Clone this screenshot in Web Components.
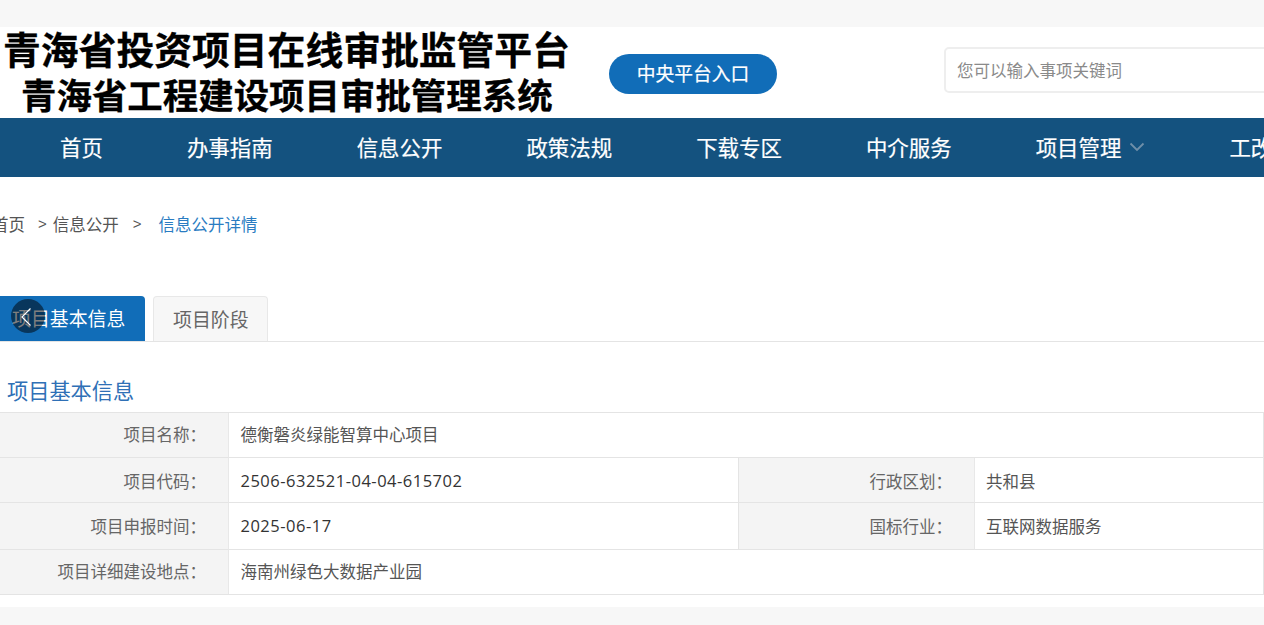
<!DOCTYPE html>
<html lang="zh-CN">
<head>
<meta charset="UTF-8">
<title>项目基本信息</title>
<style>
    html, body { margin: 0; height: 625px; overflow: hidden; background: #f7f7f7; }
    body { font-family: "Noto Sans CJK SC", "Liberation Sans", sans-serif; }
</style>
</head>
<body>
<site-header></site-header>
<site-nav>
    <nav-item>首页</nav-item>
    <nav-item>办事指南</nav-item>
    <nav-item>信息公开</nav-item>
    <nav-item>政策法规</nav-item>
    <nav-item>下载专区</nav-item>
    <nav-item>中介服务</nav-item>
    <nav-item more>项目管理</nav-item>
    <nav-item>工改</nav-item>
</site-nav>
<main-panel>
    <bread-crumb></bread-crumb>
    <tab-bar></tab-bar>
    <info-table></info-table>
</main-panel>

<script>
class SiteHeader extends HTMLElement {
    constructor() {
        super();
        this.attachShadow({ mode: 'open' });
    }
    connectedCallback() {
        this.shadowRoot.innerHTML = `
            <style>
                :host { display: flex; margin-top: 27px; height: 91px; background: #fff; font-family: "Noto Sans CJK SC", sans-serif; }
                .logo { flex: 0 0 606px; margin: -2px 0 0 3px; color: #000; font-weight: 700; white-space: nowrap; -webkit-text-stroke: .3px #000; }
                .logo div:first-child { font-size: 37.8px; line-height: 46px; }
                .logo div:last-child { font-size: 35.45px; line-height: 46px; margin-left: 18px; }
                .btn { flex: 0 0 168px; height: 40px; margin: 27px 167px 0 0; border-radius: 20px; background: #116db8; color: #fff; font-size: 18.8px; line-height: 38px; text-align: center; -webkit-text-stroke: .2px #fff; }
                .search { flex: 0 0 400px; box-sizing: border-box; height: 46px; margin-top: 20px; padding-left: 11px; border: 2px solid #eee; border-radius: 5px; color: #8a8a8a; font-size: 16.5px; line-height: 42px; overflow: hidden; }
            </style>
            <div class="logo"><div>青海省投资项目在线审批监管平台</div><div>青海省工程建设项目审批管理系统</div></div>
            <div class="btn">中央平台入口</div>
            <div class="search">您可以输入事项关键词</div>
        `;
    }
}

class SiteNav extends HTMLElement {
    constructor() {
        super();
        this.attachShadow({ mode: 'open' });
    }
    connectedCallback() {
        this.shadowRoot.innerHTML = `
            <style>
                :host { display: flex; height: 59px; padding-left: 18px; background: #14527f; overflow: hidden; }
            </style>
            <slot></slot>
        `;
    }
}

class NavItem extends HTMLElement {
    constructor() {
        super();
        this.attachShadow({ mode: 'open' });
    }
    connectedCallback() {
        const more = this.hasAttribute('more');
        this.shadowRoot.innerHTML = `
            <style>
                :host { display: flex; flex: none; align-items: center; box-sizing: border-box; height: 57px; padding: 0 42px; color: #fff; font-size: 21.45px; white-space: nowrap; -webkit-text-stroke: .2px #fff; }
                svg { margin-left: 8px; }
            </style>
            <slot></slot>
            ${more ? '<svg width="16" height="10" viewBox="0 0 16 10" fill="none" stroke="#6f8fa9" stroke-width="1.8"><path d="M1.500 1.500 8 8l6.500-6.500"/></svg>' : ''}
        `;
    }
}

class MainPanel extends HTMLElement {
    constructor() {
        super();
        this.attachShadow({ mode: 'open' });
    }
    connectedCallback() {
        this.shadowRoot.innerHTML = `
            <style>
                :host { display: block; height: 430px; background: #fff; overflow: hidden; }
            </style>
            <slot></slot>
        `;
    }
}

class BreadCrumb extends HTMLElement {
    constructor() {
        super();
        this.attachShadow({ mode: 'open' });
    }
    connectedCallback() {
        this.shadowRoot.innerHTML = `
            <style>
                :host { display: flex; height: 24px; margin: 35px 0 0 -8px; color: #555; font-size: 16.5px; line-height: 24px; white-space: nowrap; }
                .sep { font-family: "Liberation Sans", sans-serif; font-size: 15px; }
                .cur { color: #2a7cc2; }
            </style>
            <span>首页</span>
            <span class="sep" style="margin-left:13px">&gt;</span>
            <span style="margin-left:6px">信息公开</span>
            <span class="sep" style="margin-left:14px">&gt;</span>
            <span class="cur" style="margin-left:17px">信息公开详情</span>
        `;
    }
}

class TabBar extends HTMLElement {
    constructor() {
        super();
        this.attachShadow({ mode: 'open' });
    }
    connectedCallback() {
        this.shadowRoot.innerHTML = `
            <style>
                :host { display: flex; position: relative; gap: 8px; height: 45px; margin: 60px 0 0 -8px; padding-right: 8px; border-bottom: 1px solid #e4e4e4; font-size: 18.9px; white-space: nowrap; }
                .tab { box-sizing: border-box; height: 45px; padding: 0 18px 0 19px; border: 1px solid #e8e8e8; border-bottom: 0; border-radius: 4px 4px 0 0; background: #f7f7f7; color: #666; line-height: 44px; }
                .tab.on { width: 153px; padding: 0 0 0 20px; border: 0; background: #116db8; color: #fff; }
                .prev { position: absolute; left: 19px; top: 3px; width: 34px; height: 34px; border-radius: 50%; background: rgba(0, 0, 0, .5); }
                .prev svg { display: block; }
            </style>
            <div class="tab on">项目基本信息</div>
            <div class="tab">项目阶段</div>
            <div class="prev"><svg width="34" height="34" viewBox="0 0 34 34" fill="none" stroke="#fff" stroke-width="1.2"><path d="M19.500 9.500 11 18l8.500 8.500"/></svg></div>
        `;
    }
}

class InfoTable extends HTMLElement {
    constructor() {
        super();
        this.attachShadow({ mode: 'open' });
    }
    connectedCallback() {
        this.shadowRoot.innerHTML = `
            <style>
                :host { display: block; margin-left: -12px; font-size: 16.5px; }
                h3 { margin: 33px 0 7px 19px; color: #2f70b6; font-size: 21.2px; font-weight: 400; line-height: 30px; }
                .grid { display: grid; grid-template-columns: 241px 510px 236px 289px; grid-template-rows: 45px 45px 47px 44px; width: 1276px; box-sizing: border-box; border: solid #e4e4e4; border-width: 1px 1px 1px 0; }
                .grid > div { box-sizing: border-box; padding: 0 11.5px; border-bottom: 1px solid #e4e4e4; white-space: nowrap; }
                .grid > div:nth-last-child(-n+2) { border-bottom: 0; }
                .r1 { line-height: 42px; }
                .r2 { line-height: 46px; }
                .r3 { line-height: 46px; }
                .r4 { line-height: 42px; }
                .k { padding-right: 22px !important; border-right: 1px solid #e8e8e8; background: #f4f4f4; color: #666; text-align: right; }
                .v { color: #555; }
                .v.num { color: #333; font-family: "Open Sans", sans-serif; font-size: 16.5px; letter-spacing: .5px; }
                .v.bar { border-right: 1px solid #e4e4e4; }
                .v.end { padding-left: 11px; }
                .wide { grid-column: span 3; }
            </style>
            <h3>项目基本信息</h3>
            <div class="grid">
                <div class="k r1">项目名称：</div><div class="v r1 wide">德衡磐炎绿能智算中心项目</div>
                <div class="k r2">项目代码：</div><div class="v r2 num bar">2506-632521-04-04-615702</div>
                <div class="k r2">行政区划：</div><div class="v r2 end">共和县</div>
                <div class="k r3">项目申报时间：</div><div class="v r3 num bar">2025-06-17</div>
                <div class="k r3">国标行业：</div><div class="v r3 end">互联网数据服务</div>
                <div class="k r4">项目详细建设地点：</div><div class="v r4 wide">海南州绿色大数据产业园</div>
            </div>
        `;
    }
}

customElements.define('site-header', SiteHeader);
customElements.define('site-nav', SiteNav);
customElements.define('nav-item', NavItem);
customElements.define('main-panel', MainPanel);
customElements.define('bread-crumb', BreadCrumb);
customElements.define('tab-bar', TabBar);
customElements.define('info-table', InfoTable);
</script>
</body>
</html>
